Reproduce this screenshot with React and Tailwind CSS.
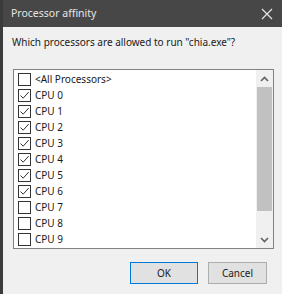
import React from 'react';

const rows = [
  { label: '<All Processors>', checked: false },
  { label: 'CPU 0', checked: true },
  { label: 'CPU 1', checked: true },
  { label: 'CPU 2', checked: true },
  { label: 'CPU 3', checked: true },
  { label: 'CPU 4', checked: true },
  { label: 'CPU 5', checked: true },
  { label: 'CPU 6', checked: true },
  { label: 'CPU 7', checked: false },
  { label: 'CPU 8', checked: false },
  { label: 'CPU 9', checked: false },
  { label: '', checked: false },
];

const Box = ({ checked }) => (
  <div className="w-[13px] h-[13px] border border-[#333333] bg-white flex items-center justify-center shrink-0">
    {checked && (
      <svg width="11" height="11" viewBox="0 0 11 11">
        <path d="M1.5 5.5 L4.2 8.2 L9.5 2.2" fill="none" stroke="#333" strokeWidth="1" />
      </svg>
    )}
  </div>
);

const App = () => {
  return (
    <div
      className="w-[282px] h-[294px] flex flex-col bg-[#f0f0f0] border-l-[3px] border-[#3b3b3b] overflow-hidden text-[#1a1a1a]"
      style={{ fontFamily: '"Noto Sans", "Open Sans", sans-serif' }}
    >
      <div className="h-[27px] shrink-0 bg-[#474747] flex items-center justify-between pl-[8px] pr-[9px]">
        <span className="text-[10.5px] text-[#e6e6e6]">Processor affinity</span>
        <svg width="12" height="12" viewBox="0 0 12 12">
          <path d="M1 1 L11 11 M11 1 L1 11" stroke="#e6e6e6" strokeWidth="1.2" />
        </svg>
      </div>

      <div className="pl-[9px] pt-[8px] h-[42px] shrink-0 text-[10px]">Which processors are allowed to run "chia.exe"?</div>

      <div className="ml-[10px] w-[261px] h-[180px] shrink-0 border border-[#828282] bg-white flex overflow-hidden">
        <div className="flex-1 flex flex-col pt-[1px] pl-[4px]">
          {rows.map((r, i) => (
            <div key={i} className="h-[16px] shrink-0 flex items-center gap-[4px] text-[10px]">
              <Box checked={r.checked} />
              {r.label && <span>{r.label}</span>}
            </div>
          ))}
        </div>
        <div className="w-[17px] bg-[#f0f0f0] flex flex-col items-center">
          <div className="h-[17px] w-full flex items-center justify-center">
            <svg width="9" height="6" viewBox="0 0 9 6">
              <path d="M1 5 L4.5 1.5 L8 5" fill="none" stroke="#606060" strokeWidth="1.6" />
            </svg>
          </div>
          <div className="w-[15px] h-[124px] bg-[#c1c1c1]" />
          <div className="flex-1" />
          <div className="h-[17px] w-full flex items-center justify-center">
            <svg width="9" height="6" viewBox="0 0 9 6">
              <path d="M1 1 L4.5 4.5 L8 1" fill="none" stroke="#606060" strokeWidth="1.6" />
            </svg>
          </div>
        </div>
      </div>

      <div className="flex justify-end gap-[10px] pr-[15px] pt-[13px]">
        <button className="w-[68px] h-[22px] bg-[#e1e1e1] border border-[#0078d7] text-[10px] flex items-center justify-center">OK</button>
        <button className="w-[59px] h-[22px] bg-[#e1e1e1] border border-[#adadad] text-[10px] flex items-center justify-center">Cancel</button>
      </div>
    </div>
  );
};

export default App;
